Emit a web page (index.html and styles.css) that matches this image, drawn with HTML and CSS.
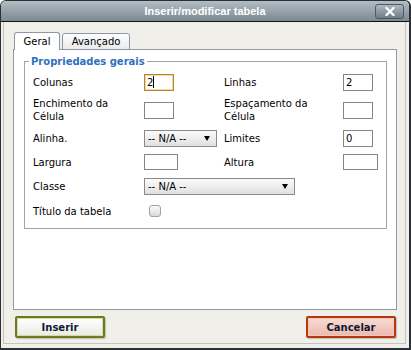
FILE: index.html
```html
<!DOCTYPE html>
<html lang="pt">
<head>
<meta charset="utf-8">
<title>Inserir/modificar tabela</title>
<link rel="stylesheet" href="styles.css">
</head>
<body>
<div class="window">
  <div class="titlebar">
    <span></span>
    <span class="title">Inserir/modificar tabela</span>
    <span class="close">
      <svg width="10" height="9" viewBox="0 0 10 9"><path d="M1.5 1 L8.5 8 M8.5 1 L1.5 8" stroke="#fff" stroke-width="2.2" stroke-linecap="square"/></svg>
    </span>
  </div>
  <div class="body">
    <div class="tabs">
      <div class="tab active tab-geral">Geral</div>
      <div class="tab tab-adv">Avançado</div>
    </div>
    <div class="panel">
      <fieldset class="group">
        <legend>Propriedades gerais</legend>
        <div class="grid">
          <span class="lbl">Colunas</span>
          <div><span class="input focus">2<span class="caret"></span></span></div>
          <span class="lbl">Linhas</span>
          <div><span class="input">2</span></div>

          <span class="lbl two">Enchimento da<br>Célula</span>
          <div><span class="input"></span></div>
          <span class="lbl two">Espaçamento da<br>Célula</span>
          <div><span class="input"></span></div>

          <span class="lbl">Alinha.</span>
          <div><span class="select sel-small"><span>-- N/A --</span><svg class="arrow" width="6" height="5" viewBox="0 0 6 5"><path d="M0 0 H6 L3 5 Z" fill="#000"/></svg></span></div>
          <span class="lbl">Limites</span>
          <div><span class="input">0</span></div>

          <span class="lbl">Largura</span>
          <div><span class="input wide">&nbsp;</span></div>
          <span class="lbl">Altura</span>
          <div><span class="input wider">&nbsp;</span></div>

          <span class="lbl">Classe</span>
          <div class="span3"><span class="select sel-large"><span>-- N/A --</span><svg class="arrow" width="6" height="5" viewBox="0 0 6 5"><path d="M0 0 H6 L3 5 Z" fill="#000"/></svg></span></div>

          <span class="lbl">Título da tabela</span>
          <div><span class="check"></span></div>
        </div>
      </fieldset>
    </div>
    <div class="actions">
      <button class="btn ok">Inserir</button>
      <button class="btn cancel">Cancelar</button>
    </div>
  </div>
</div>
</body>
</html>
```
FILE: styles.css
```css
* { box-sizing: border-box; }

body {
  margin: 0;
  background: #ffffff;
  font-family: "DejaVu Sans", Verdana, sans-serif;
  font-size: 10px;
  color: #000;
}

.window {
  width: 411px;
  height: 350px;
  border-style: solid;
  border-color: #2b3036;
  border-width: 1px 2px 2px 1px;
  border-radius: 6px 6px 0 0;
  background: #f0efea;
  display: flex;
  flex-direction: column;
  overflow: hidden;
}

.titlebar {
  flex: none;
  height: 21px;
  border-bottom: 1px solid #111;
  background: linear-gradient(#b2bcc3, #7c8993);
  display: grid;
  grid-template-columns: 1fr auto 1fr;
  align-items: center;
}

.title {
  font-family: "Liberation Sans", Arial, sans-serif;
  font-weight: bold;
  font-size: 11px;
  color: #fff;
}

.close {
  justify-self: end;
  margin-right: 5px;
  width: 29px;
  height: 15px;
  border: 1px solid #4d5861;
  border-radius: 3px;
  background: linear-gradient(#adb7bf, #717d87);
  display: flex;
  align-items: center;
  justify-content: center;
}

.body {
  flex: 1;
  margin: 0 3px 4px 2px;
  border: 1px solid #c5c3bc;
  border-top: none;
  padding: 10px 8px 5px 9px;
  display: flex;
  flex-direction: column;
}

.tabs {
  display: flex;
  align-items: flex-end;
  gap: 2px;
  height: 18px;
  margin: 0 0 -1px 1px;
  position: relative;
  z-index: 1;
}

.tab {
  height: 17px;
  border: 1px solid #8b99a6;
  border-radius: 3px 3px 0 0;
  background: linear-gradient(#fdfdfd, #ebebeb);
  display: flex;
  align-items: center;
  justify-content: center;
}

.tab.active {
  height: 18px;
  border-bottom: none;
  background: #fff;
}

.tab-geral { width: 46px; }
.tab-adv { width: 68px; }

.panel {
  flex: 1;
  border: 1px solid #919b9c;
  background: #fff;
  padding: 5px 9px 0 10px;
}

.group {
  margin: 0;
  padding: 0 0 6px 0;
  border: 1px solid #a4a4a4;
}

.group legend {
  margin-left: 4px;
  padding: 0 2px;
  font-weight: bold;
  color: #2f6fbd;
  line-height: 13px;
}

.grid {
  display: grid;
  grid-template-columns: 111px 80px 119px 1fr;
  grid-template-rows: 28px 28px 28px 20px 28px 22px;
  align-items: center;
  padding-left: 8px;
}

.lbl { line-height: 13px; }

.input {
  display: block;
  width: 30px;
  height: 17px;
  border: 1px solid #858585;
  background: #fff;
  padding-left: 2px;
  line-height: 15px;
}

.input.wide { width: 34px; height: 16px; line-height: 14px; }
.input.wider { width: 35px; height: 16px; line-height: 14px; }

.input.focus {
  border-color: #b8862f;
  box-shadow: inset 0 0 0 1px #f0d7a6;
}

.caret {
  display: inline-block;
  width: 1px;
  height: 12px;
  background: #000;
  vertical-align: -2px;
}

.select {
  display: flex;
  align-items: center;
  justify-content: space-between;
  height: 17px;
  border: 1px solid #8a8a8a;
  background: linear-gradient(#fbfbfb, #e0e0e0);
  padding: 0 6px 0 3px;
}

.sel-small { width: 73px; }
.sel-large { width: 151px; }

.span3 { grid-column: 2 / span 3; }

.check {
  display: block;
  width: 12px;
  height: 12px;
  margin-left: 5px;
  border: 1px solid #a3a3a3;
  border-radius: 3px;
  background: linear-gradient(#fbfbfb, #d8d8d8);
}

.actions {
  display: flex;
  justify-content: space-between;
  margin-top: 6px;
  padding: 0 1px 0 2px;
}

.btn {
  width: 90px;
  height: 22px;
  padding: 0;
  font-family: "DejaVu Sans", Verdana, sans-serif;
  font-weight: bold;
  font-size: 10px;
  color: #0c1a36;
  border: 2px solid;
  border-radius: 2px;
}

.btn.ok {
  border-color: #6d7b1d;
  background: linear-gradient(#ffffff, #e9e9e4);
  box-shadow: inset 0 0 0 1px #d4dba4, 1px 1px 1px rgba(0, 0, 0, 0.2);
}

.btn.cancel {
  border-color: #b5380f;
  background: linear-gradient(#f8dbd4, #eeb8ad);
  box-shadow: inset 0 0 0 1px #f3c9bf, 1px 1px 1px rgba(0, 0, 0, 0.2);
}
```
